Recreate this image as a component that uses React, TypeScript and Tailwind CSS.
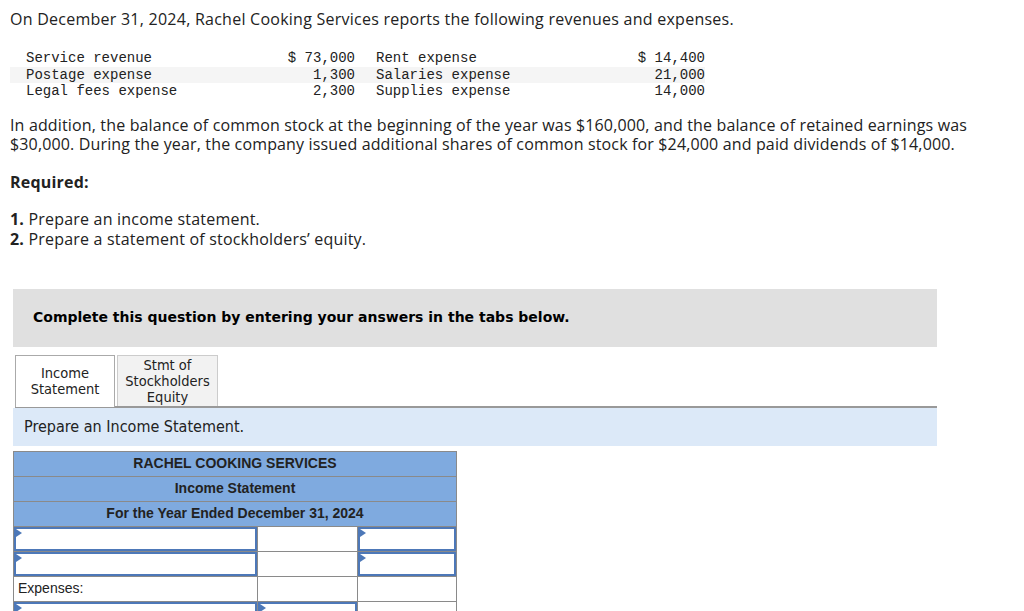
import React from 'react';

const sans = { fontFamily: '"Open Sans", Arial, sans-serif' };

interface ExpenseRow {
  left: string;
  leftAmt: string;
  right: string;
  rightAmt: string;
}

const rows: ExpenseRow[] = [
  { left: 'Service revenue', leftAmt: '$ 73,000', right: 'Rent expense', rightAmt: '$ 14,400' },
  { left: 'Postage expense', leftAmt: '1,300', right: 'Salaries expense', rightAmt: '21,000' },
  { left: 'Legal fees expense', leftAmt: '2,300', right: 'Supplies expense', rightAmt: '14,000' },
];

/** Input cell: blue frame with the little marker in its corner. */
const InputCell: React.FC<{ marker?: boolean; className?: string }> = ({ marker = true, className = '' }) => (
  <div className={`relative h-full border-2 border-[#4d78b8] bg-white ${className}`}>
    {marker && (
      <span className="absolute left-0 top-0 h-0 w-0 border-y-[4px] border-l-[6px] border-y-transparent border-l-[#4d78b8]" />
    )}
  </div>
);

const HeaderRow: React.FC<{ text: string }> = ({ text }) => (
  <div className="flex h-[25px] items-center justify-center border-b border-[#8a8a8a] bg-[#7faadf] text-[14px] font-bold text-[#222]">
    {text}
  </div>
);

export default function App() {
  return (
    <div className="min-h-screen bg-white text-[#222]" style={sans}>
      <div className="px-[10px] pt-[8px] tracking-[0.2px]">
        <p className="text-[16px] leading-[22px] tracking-[0.25px]">
          On December 31, 2024, Rachel Cooking Services reports the following revenues and expenses.
        </p>

        <div className="mt-[20px] w-[695px] font-['Liberation_Mono',monospace] text-[14px] leading-[16.5px] tracking-normal text-[#222]">
          {rows.map((r, i) => (
            <div key={i} className={`flex ${i === 1 ? 'bg-[#f5f5f5]' : ''}`}>
              <span className="w-[250px] pl-[16px]">{r.left}</span>
              <span className="w-[95px] text-right">{r.leftAmt}</span>
              <span className="ml-[21px] w-[180px]">{r.right}</span>
              <span className="w-[149px] text-right">{r.rightAmt}</span>
            </div>
          ))}
        </div>

        <p className="mt-[16px] text-[16px] leading-[19px] tracking-[0.15px]">
          In addition, the balance of common stock at the beginning of the year was $160,000, and the balance of retained earnings was
          $30,000. During the year, the company issued additional shares of common stock for $24,000 and paid dividends of $14,000.
        </p>

        <p className="mt-[19px] text-[16px] font-bold leading-[19px]">Required:</p>

        <div className="mt-[17px] text-[16px] leading-[20px]">
          <p><b>1.</b> Prepare an income statement.</p>
          <p><b>2.</b> Prepare a statement of stockholders’ equity.</p>
        </div>
      </div>

      <div className="ml-[13px] mt-[40px] w-[924px]">
        <div className="flex h-[58px] items-center bg-[#e0e0e0] pl-[20px] font-['DejaVu_Sans',Verdana,sans-serif] text-[14px] font-bold text-black">
          Complete this question by entering your answers in the tabs below.
        </div>

        <div className="mt-[8px] flex items-end gap-[2px] pl-[2px] font-['DejaVu_Sans_Condensed','DejaVu_Sans',sans-serif] text-[14.5px] leading-[16px] text-[#222]">
          <div className="-mb-px flex h-[52px] w-[100px] items-center justify-center border border-b-0 border-[#aaa] bg-white text-center">
            Income<br />Statement
          </div>
          <div className="flex h-[51px] w-[101px] items-center justify-center border border-b-0 border-[#ccc] bg-[#f2f2f2] text-center">
            Stmt of<br />Stockholders<br />Equity
          </div>
        </div>
        <div className="ml-[2px] border-t-2 border-[#999]" />
        <div className="flex h-[38px] items-center bg-[#dce9f8] pl-[11px] font-['DejaVu_Sans_Condensed','DejaVu_Sans',sans-serif] text-[16px] text-[#222]">
          Prepare an Income Statement.
        </div>
      </div>

      <div className="ml-[13px] mt-[5px] w-[444px] border border-b-0 border-[#8a8a8a] font-['Liberation_Sans',Arial,sans-serif]">
        <HeaderRow text="RACHEL COOKING SERVICES" />
        <HeaderRow text="Income Statement" />
        <HeaderRow text="For the Year Ended December 31, 2024" />

        <div className="grid grid-cols-[244px_100px_98px] grid-rows-[25px_25px_25px_25px]">
          <div className="border-b border-r border-[#8a8a8a]"><InputCell /></div>
          <div className="border-b border-r border-[#8a8a8a]" />
          <div className="border-b border-[#8a8a8a]"><InputCell /></div>

          <div className="border-b border-r border-[#8a8a8a]"><InputCell /></div>
          <div className="border-b border-r border-[#8a8a8a]" />
          <div className="border-b border-[#8a8a8a]"><InputCell /></div>

          <div className="flex items-center border-b border-r border-[#8a8a8a] pl-[4px] text-[14px] text-[#222]">Expenses:</div>
          <div className="border-b border-r border-[#8a8a8a]" />
          <div className="border-b border-[#8a8a8a]" />

          <div className="border-r border-[#8a8a8a]"><InputCell /></div>
          <div className="border-r border-[#8a8a8a]"><InputCell /></div>
          <div />
        </div>
      </div>
    </div>
  );
}
